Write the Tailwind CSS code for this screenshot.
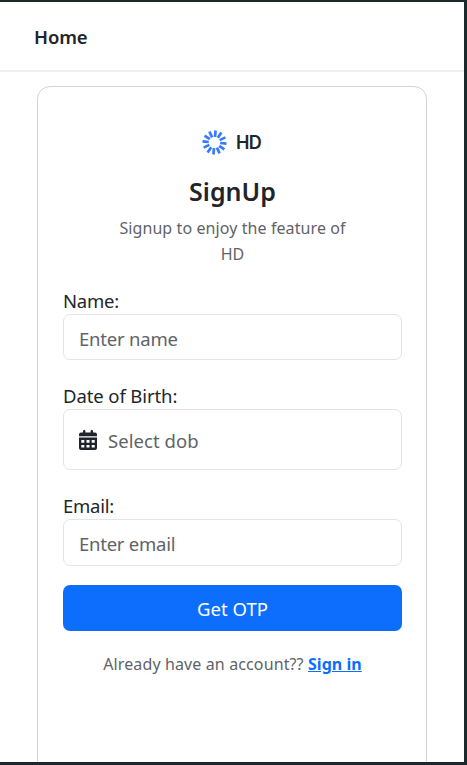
<!DOCTYPE html>
<html lang="en">
<head>
<meta charset="utf-8">
<title>SignUp</title>
<script src="https://cdn.jsdelivr.net/npm/@tailwindcss/browser@4"></script>
</head>
<body class="h-[765px] overflow-hidden bg-white font-['Noto_Sans','Open_Sans',sans-serif] text-[#212529]">
<div class="flex h-full flex-col border-t-2 border-r-3 border-b-3 border-[#1b292d]">
  <nav class="flex h-[70px] shrink-0 items-center border-b-2 border-[#efefef] pt-[2px] pl-[34px]">
    <a class="text-[18.500px] font-semibold leading-[30px] tracking-[-0.1px]">Home</a>
  </nav>
  <main class="min-h-0 flex-1 overflow-hidden pt-[14px] pl-[37px]">
    <section class="flex h-[760px] w-[390px] flex-col rounded-[13px] border border-[#d3d4d5] pt-[40px] pr-[24px] pl-[25px]">
      <div class="flex h-[30px] items-center justify-center gap-[9px] pr-[2px]">
        <svg class="size-[25px]" viewBox="-12.5 -12.5 25 25" stroke="#367aff" stroke-width="2.7">
          <path d="M0.5-5.7 1.1-12M3.3-4.7 6.9-9.9M5.2-2.4 10.9-5.1M5.7.5 12 1.1M4.7 3.3 9.9 6.9M2.4 5.2 5.1 10.9M-.5 5.7-1.1 12M-3.3 4.7-6.9 9.9M-5.2 2.4-10.9 5.1M-5.7-.5-12-1.1M-4.7-3.3-9.9-6.9M-2.4-5.2-5.1-10.9"/>
        </svg>
        <span class="pt-px font-[Inter] text-[18px] font-semibold leading-[30px] tracking-[-0.7px]">HD</span>
      </div>
      <h1 class="mt-[18px] text-center text-[25px] font-semibold leading-[32px]">SignUp</h1>
      <p class="mx-auto mt-[8px] w-[250px] text-center text-[16px] leading-[26px] tracking-[0.09px] text-[#5f6368]">Signup to enjoy the feature of<br>HD</p>
      <div class="mt-[19px] flex flex-col">
        <label class="h-[28px] text-[18.5px] leading-[30px] tracking-[-0.25px]">Name:</label>
        <div class="flex h-[46px] items-center rounded-[7px] border border-[#e2e4e6] px-[15px] pt-[3px] text-[18.5px] tracking-[-0.2px] text-[#5f6368]">Enter name</div>
      </div>
      <div class="mt-[21px] flex flex-col">
        <label class="h-[28px] text-[18.5px] leading-[30px] tracking-[-0.1px]">Date of Birth:</label>
        <div class="flex h-[61px] items-center gap-[11px] rounded-[7px] border border-[#e2e4e6] px-[15px] text-[18.5px] tracking-[0.05px] text-[#5f6368]">
          <svg class="h-5 w-[18px] shrink-0" viewBox="0 0 18 20" fill="#212529"><path fill-rule="evenodd" d="M4 1.200a1.200 1.200 0 0 1 2.400 0V2.500h5.200V1.200a1.200 1.200 0 0 1 2.400 0V2.500h2a2 2 0 0 1 2 2V6.300H0V4.500a2 2 0 0 1 2-2h2zM0 7.500h18V18a2 2 0 0 1-2 2H2a2 2 0 0 1-2-2zM2.300 10v2.700h3V10zM7.500 10v2.700h3V10zM12.700 10v2.700h3V10zM2.300 14.900v2.700h3v-2.700zM7.500 14.900v2.700h3v-2.700zM12.700 14.900v2.700h3v-2.700z"/></svg>
          <span class="pt-[2px]">Select dob</span>
        </div>
      </div>
      <div class="mt-[21px] flex flex-col">
        <label class="h-[28px] text-[18.5px] leading-[30px] tracking-[-0.25px]">Email:</label>
        <div class="flex h-[47px] items-center rounded-[7px] border border-[#e2e4e6] px-[15px] pt-[2px] text-[18.5px] tracking-[-0.25px] text-[#5f6368]">Enter email</div>
      </div>
      <button class="mt-[19px] h-[46px] shrink-0 rounded-[7px] bg-[#0d6efd] pt-px text-[18.5px] tracking-[0.05px] text-white">Get OTP</button>
      <p class="mt-[20px] text-center text-[16px] leading-[26px] tracking-[0.12px] text-[#5f6368]"><span>Already have an account??</span> <a class="font-bold tracking-[0.050px] text-[#0d6efd] underline">Sign in</a></p>
    </section>
  </main>
</div>
</body>
</html>
